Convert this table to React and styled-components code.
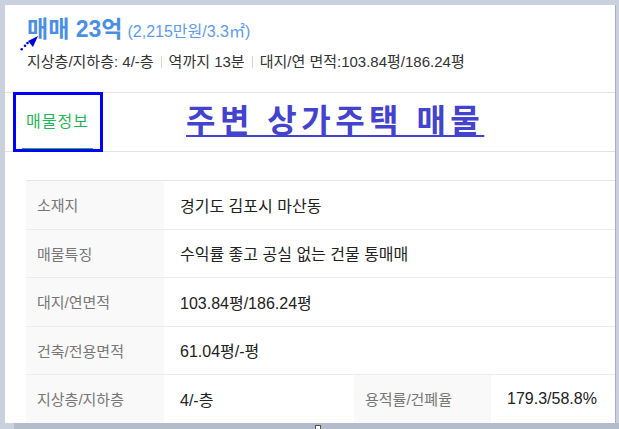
import React from "react";
import styled, { createGlobalStyle } from "styled-components";

const rows = [
  { label: "소재지", value: "경기도 김포시 마산동" },
  { label: "매물특징", value: "수익률 좋고 공실 없는 건물 통매매" },
  { label: "대지/연면적", value: "103.84평/186.24평" },
  { label: "건축/전용면적", value: "61.04평/-평" },
];

const GlobalStyle = createGlobalStyle`
  html, body {
    margin: 0;
    padding: 0;
  }
  body {
    background: #c9d1df;
    font-family: "Liberation Sans", "Noto Sans CJK KR", sans-serif;
  }
`;

const Page = styled.div`
  width: 619px;
  height: 429px;
  padding: 5px 0 0 5px;
  box-sizing: border-box;
  overflow: hidden;
`;

const Panel = styled.div`
  position: relative;
  width: 610px;
  height: 418px;
  background: #ffffff;
  border-right: 1px solid #a9b1bf;
  overflow: hidden;
`;

const Header = styled.header`
  padding: 8px 0 0 22px;
  height: 79px;
`;

const TitleRow = styled.div`
  display: flex;
  align-items: baseline;
  gap: 5px;
`;

const Price = styled.h1`
  margin: 0;
  font-size: 23px;
  font-weight: 700;
  color: #4a8fe6;
  line-height: 32px;
`;

const UnitPrice = styled.span`
  font-size: 16px;
  color: #5e9bee;
`;

const InfoLine = styled.div`
  display: flex;
  align-items: center;
  margin-top: 7px;
  font-size: 15px;
  color: #333;
  line-height: 20px;
`;

const Sep = styled.span`
  width: 1px;
  height: 12px;
  background: #d4d4d4;
  margin: 0 7px;
`;

const TabBar = styled.nav`
  display: flex;
  align-items: stretch;
  height: 58px;
  border-top: 1px solid #e2e2e2;
  border-bottom: 1px solid #e2e2e2;
`;

const Tab = styled.div`
  display: flex;
  align-items: center;
  justify-content: center;
  width: 71px;
  margin-left: 17px;
  padding-bottom: 2px;
  box-sizing: border-box;
  font-size: 16px;
  letter-spacing: 1px;
  color: ${(p) => (p.active ? "#1fb655" : "#666")};
  border-bottom: 3px solid ${(p) => (p.active ? "#1fb655" : "transparent")};
`;

const Heading = styled.h2`
  margin: 0 0 0 93px;
  align-self: center;
  padding-bottom: 9px;
  font-size: 32px;
  font-weight: 700;
  color: #4343cf;
  text-decoration: underline;
  text-decoration-thickness: 2px;
  text-underline-offset: 3px;
  letter-spacing: 4.5px;
  white-space: pre;
`;

const Table = styled.div`
  margin: 28px 0 0 21px;
  border-top: 1px solid #e6e6e6;
`;

const Row = styled.div`
  display: grid;
  grid-template-columns: ${(p) => (p.split ? "138px 190px 137px 1fr" : "138px 1fr")};
  height: 48.5px;
  border-bottom: 1px solid #ececec;
  box-sizing: border-box;
`;

const Label = styled.div`
  display: flex;
  align-items: center;
  padding-left: 11px;
  background: #f9f9f9;
  font-size: 15px;
  color: #777;
`;

const Value = styled.div`
  display: flex;
  align-items: center;
  padding-left: 16px;
  font-size: 16px;
  color: #222;
`;

const Marker = styled.div`
  position: absolute;
  left: 8px;
  top: 87px;
  width: 84px;
  height: 54px;
  border: 3px solid #0000ff;
`;

const Arrow = styled.svg`
  position: absolute;
  left: 8px;
  top: 28px;
`;

const Bottom = styled.div`
  height: 6px;
  margin-left: 9px;
  background: #b3bccb;
  position: relative;
`;

const Handle = styled.span`
  position: absolute;
  left: 301px;
  top: 2px;
  width: 4px;
  height: 4px;
  background: #fff;
  border: 1px solid #555;
`;

function App() {
  return (
    <Page>
      <GlobalStyle />
      <Panel>
        <Header>
          <TitleRow>
            <Price>매매 23억</Price>
            <UnitPrice>(2,215만원/3.3㎡)</UnitPrice>
          </TitleRow>
          <InfoLine>
            <span>지상층/지하층: 4/-층</span>
            <Sep />
            <span>역까지 13분</span>
            <Sep />
            <span>대지/연 면적:103.84평/186.24평</span>
          </InfoLine>
        </Header>
        <TabBar>
          <Tab active>매물정보</Tab>
          <Heading>{"주변 상가주택 매물"}</Heading>
        </TabBar>
        <Table>
          {rows.map((r) => (
            <Row key={r.label}>
              <Label>{r.label}</Label>
              <Value>{r.value}</Value>
            </Row>
          ))}
          <Row split>
            <Label>지상층/지하층</Label>
            <Value>4/-층</Value>
            <Label>용적률/건폐율</Label>
            <Value>179.3/58.8%</Value>
          </Row>
        </Table>
        <Marker />
        <Arrow width="30" height="22" viewBox="0 0 30 22">
          <polygon points="25,3 15,8 20,14" fill="#0000e8" />
          <circle cx="14.5" cy="10" r="1.3" fill="#0000e8" />
          <circle cx="12" cy="12.7" r="1.3" fill="#0000e8" />
          <circle cx="8.7" cy="16.3" r="1.3" fill="#0000e8" />
        </Arrow>
      </Panel>
      <Bottom>
        <Handle />
      </Bottom>
    </Page>
  );
}

export default App;
